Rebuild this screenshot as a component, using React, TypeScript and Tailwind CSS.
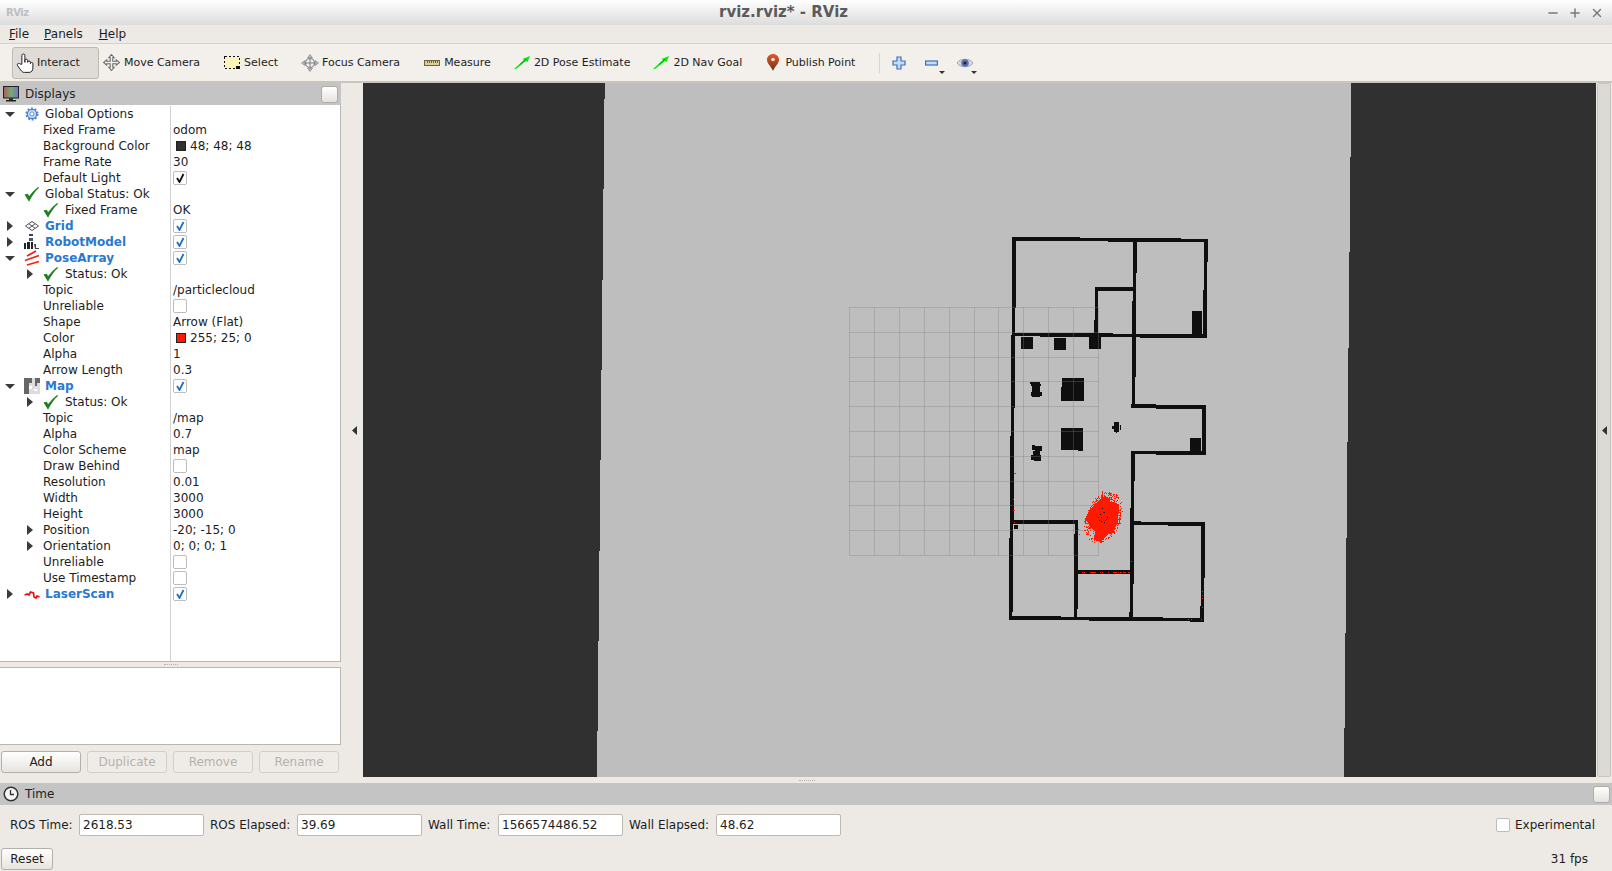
import React from "react";
import { Minus, Plus, X } from "lucide-react";

const font = "font-['DejaVu_Sans',sans-serif]";

// walls and furniture of the map, as x, y, w, h in window pixels
const walls: number[][] = [
  [1012, 237, 68, 4], [1080, 238, 28, 3], [1108, 238, 73, 4], [1181, 239, 27, 3],
  [1012, 237, 4, 71], [1012, 308, 3, 27],
  [1204, 239, 4, 23], [1204, 262, 3, 28], [1203, 290, 4, 48],
  [1133, 239, 4, 34], [1133, 273, 3, 28], [1132, 301, 4, 76], [1132, 377, 3, 27],
  [1095, 287, 38, 4], [1095, 287, 3, 33], [1094, 320, 4, 13],
  [1012, 333, 28, 3], [1040, 333, 73, 4], [1113, 334, 27, 3], [1140, 334, 67, 4],
  [1011, 335, 4, 73], [1011, 408, 3, 28], [1010, 436, 4, 84], [1010, 520, 3, 18],
  [1009, 538, 4, 74], [1009, 612, 3, 8],
  [1021, 337, 12, 12], [1054, 338, 12, 12], [1089, 337, 12, 12], [1192, 311, 10, 23],
  [1062, 378, 22, 23], [1061, 387, 1, 14],
  [1030, 382, 10, 2], [1031, 384, 10, 2], [1032, 386, 8, 6], [1031, 392, 11, 4], [1032, 396, 8, 1],
  [1114, 422, 5, 10], [1112, 426, 2, 3], [1120, 425, 1, 5], [1116, 432, 1, 1],
  [1061, 428, 22, 22], [1078, 450, 5, 1],
  [1032, 445, 3, 5], [1035, 446, 7, 5], [1033, 451, 7, 4], [1031, 455, 10, 5], [1034, 460, 7, 1],
  [1131, 404, 25, 4], [1156, 405, 50, 4], [1202, 405, 4, 50], [1190, 438, 11, 13],
  [1131, 451, 25, 3], [1156, 451, 50, 4],
  [1131, 451, 4, 30], [1131, 481, 3, 27], [1130, 508, 4, 76], [1130, 584, 3, 28], [1129, 612, 4, 8],
  [1134, 521, 7, 4], [1141, 522, 27, 3], [1168, 522, 37, 4],
  [1201, 522, 4, 56], [1201, 578, 3, 28], [1200, 606, 4, 16],
  [1009, 616, 52, 4], [1061, 617, 28, 3], [1089, 617, 74, 4], [1163, 618, 27, 3], [1190, 618, 14, 4],
  [1013, 520, 65, 4], [1075, 524, 3, 10], [1074, 534, 4, 75], [1074, 609, 3, 8],
  [1078, 570, 52, 4], [1014, 525, 4, 4],
];

const redDots: number[][] = [
  [1014, 473, 2, 1], [1013, 499, 1, 1], [1013, 510, 2, 1], [1014, 522, 1, 1], [1078, 529, 1, 1], [1079, 534, 1, 1],
  [1082, 572, 1, 1], [1084, 572, 1, 1], [1090, 572, 6, 1], [1100, 572, 1, 1], [1102, 572, 1, 1], [1108, 572, 1, 1],
  [1113, 572, 4, 1], [1118, 572, 1, 1], [1120, 572, 2, 1], [1123, 572, 3, 1], [1128, 572, 2, 1], [1131, 561, 1, 1],
  [1202, 591, 1, 1], [1202, 595, 1, 1], [1202, 598, 1, 1], [1202, 607, 1, 1], [1188, 619, 1, 1], [1191, 619, 1, 1], [1201, 619, 1, 1],
  // spikes of the particle cloud
  [1102, 491, 1, 9], [1119, 517, 1, 7], [1118, 523, 3, 1], [1085, 520, 4, 1], [1094, 537, 2, 3], [1100, 540, 2, 3],
  [1117, 504, 2, 2], [1120, 509, 1, 1], [1114, 500, 1, 2], [1086, 526, 1, 1], [1108, 495, 1, 1],
];

const holes: number[][] = [
  [1100, 514], [1103, 512], [1104, 512], [1098, 517], [1101, 517], [1107, 517], [1106, 519], [1099, 520], [1101, 521], [1105, 520], [1104, 522], [1102, 508],
];

// rough edge for the particle cloud, always the same
function cloudPixels() {
  const out: number[][] = [];
  let seed = 17;
  const next = () => {
    seed = (seed * 16807) % 2147483647;
    return seed / 2147483647;
  };
  for (let i = 0; i < 320; i++) {
    const a = next() * Math.PI * 2;
    const r = 0.8 + next() * 0.42;
    const dx = Math.cos(a) * 15 * r;
    const dy = Math.sin(a) * 21 * r;
    // the cloud leans a little to the right at the top
    out.push([Math.round(1103 + dx - dy * 0.22), Math.round(517 + dy)]);
  }
  return out;
}

const Arrow = ({ open }: { open: boolean }) =>
  open ? (
    <svg width="10" height="5" viewBox="0 0 10 5" className="block">
      <path d="M0 0h10L5 5z" fill="#3b3b3b" />
    </svg>
  ) : (
    <svg width="6" height="10" viewBox="0 0 6 10" className="block">
      <path d="M0 0l6 5-6 5z" fill="#3b3b3b" />
    </svg>
  );

const Check = () => (
  <svg width="16" height="16" viewBox="0 0 16 16" className="block">
    <path d="M1.500 9l3.500 5.500C7.500 9.500 10.500 5 14.500 1.500 10.500 4.500 7.500 8 5 11.200L3.500 8.500z" fill="#1d7f1d" stroke="#1d7f1d" strokeWidth="1.200" />
  </svg>
);

const Gear = () => (
  <svg width="16" height="16" viewBox="-1.500 -1.500 19 19" className="block">
    <circle cx="8" cy="8" r="5.500" fill="#cfe0f7" stroke="#4a7fd0" strokeWidth="1.500" />
    <circle cx="8" cy="8" r="6.800" fill="none" stroke="#4a7fd0" strokeWidth="2" strokeDasharray="2.200 2.100" />
    <circle cx="8" cy="8" r="2.500" fill="#ffffff" stroke="#4a7fd0" strokeWidth="1" />
  </svg>
);

const GridIcon = () => (
  <svg width="16" height="16" viewBox="0 0 16 16" className="block">
    <path d="M8 3.500L14.500 8 8 12.500 1.500 8zM4.800 5.800l6.500 4.500M11.200 5.800l-6.500 4.500" fill="none" stroke="#555555" strokeWidth="1" />
  </svg>
);

const RobotIcon = () => (
  <svg width="16" height="16" viewBox="0 0 16 16" className="block">
    <rect x="5" y="0" width="4" height="2" fill="#3a3a7a" />
    <rect x="5" y="4" width="4" height="3" fill="#555555" />
    <path d="M0 15V9h2v6zM3 15V8h3v7zM7 15V8h2v7z" fill="#222222" />
    <path d="M10 10h2v4h3v1h-4z" fill="#444444" />
  </svg>
);

const PoseIcon = () => (
  <svg width="16" height="16" viewBox="0 0 16 16" className="block">
    <path d="M3 6L12 1M1 10.500L15 5.500 M3 15L15 11.500" stroke="#ee2211" strokeWidth="1.800" fill="none" />
  </svg>
);

const MapIcon = () => (
  <svg width="16" height="16" viewBox="0 0 16 16" className="block" shapeRendering="crispEdges">
    <rect x="0" y="0" width="16" height="16" fill="#dddddd" />
    <path d="M0 0h8v5H5v11H0zM11 0h5v5h-5zM11 5h2v3h-2z" fill="#666666" />
    <path d="M5 8h3v3H5zM10 11h3v2h-3z" fill="#ffffff" />
  </svg>
);

const LaserIcon = () => (
  <svg width="16" height="16" viewBox="0 0 16 16" className="block">
    <path d="M0.500 9l3-1 1.500 1 1.500-3 3 1 .5 4 2 1 1-2 2.500 1" fill="none" stroke="#ee1111" strokeWidth="1.700" />
  </svg>
);

type RowData = {
  label: string;
  level?: number;
  open?: boolean;
  icon?: React.ReactNode;
  bold?: boolean;
  value?: string;
  checked?: boolean;
  blue?: boolean;
  color?: string;
};

const rows: RowData[] = [
  { label: "Global Options", open: true, icon: <Gear /> },
  { label: "Fixed Frame", level: 1, value: "odom" },
  { label: "Background Color", level: 1, value: "48; 48; 48", color: "#303030" },
  { label: "Frame Rate", level: 1, value: "30" },
  { label: "Default Light", level: 1, checked: true },
  { label: "Global Status: Ok", open: true, icon: <Check /> },
  { label: "Fixed Frame", level: 1, icon: <Check />, value: "OK" },
  { label: "Grid", open: false, icon: <GridIcon />, bold: true, checked: true, blue: true },
  { label: "RobotModel", open: false, icon: <RobotIcon />, bold: true, checked: true, blue: true },
  { label: "PoseArray", open: true, icon: <PoseIcon />, bold: true, checked: true, blue: true },
  { label: "Status: Ok", level: 1, open: false, icon: <Check /> },
  { label: "Topic", level: 1, value: "/particlecloud" },
  { label: "Unreliable", level: 1, checked: false },
  { label: "Shape", level: 1, value: "Arrow (Flat)" },
  { label: "Color", level: 1, value: "255; 25; 0", color: "#ff1900" },
  { label: "Alpha", level: 1, value: "1" },
  { label: "Arrow Length", level: 1, value: "0.3" },
  { label: "Map", open: true, icon: <MapIcon />, bold: true, checked: true, blue: true },
  { label: "Status: Ok", level: 1, open: false, icon: <Check /> },
  { label: "Topic", level: 1, value: "/map" },
  { label: "Alpha", level: 1, value: "0.7" },
  { label: "Color Scheme", level: 1, value: "map" },
  { label: "Draw Behind", level: 1, checked: false },
  { label: "Resolution", level: 1, value: "0.01" },
  { label: "Width", level: 1, value: "3000" },
  { label: "Height", level: 1, value: "3000" },
  { label: "Position", level: 1, open: false, value: "-20; -15; 0" },
  { label: "Orientation", level: 1, open: false, value: "0; 0; 0; 1" },
  { label: "Unreliable", level: 1, checked: false },
  { label: "Use Timestamp", level: 1, checked: false },
  { label: "LaserScan", open: false, icon: <LaserIcon />, bold: true, checked: true, blue: true },
];

const CheckBox = ({ checked, blue }: { checked?: boolean; blue?: boolean }) => (
  <div className="w-[14px] h-[14px] border border-[#bdbdbd] rounded-[2px] bg-white flex items-center justify-center">
    {checked && (
      <svg width="10" height="10" viewBox="0 0 10 10" className="block">
        <path d="M2 5l2.500 4L8.500 1" fill="none" stroke={blue ? "#1f6fc4" : "#111111"} strokeWidth="1.800" />
      </svg>
    )}
  </div>
);

const TreeRow = ({ row }: { row: RowData }) => {
  const level = row.level ?? 0;
  return (
    <div className="flex h-4 items-center">
      <div className="w-[171px] h-4 shrink-0 flex items-center border-r border-[#d2d2d2]">
        <div className={level === 0 ? "w-[24px] shrink-0 pl-[5px]" : "w-[43px] shrink-0 pl-[27px]"}>
          {row.open !== undefined && (
            <div className={!row.open && level === 0 ? "pl-[2px]" : ""}>
              <Arrow open={row.open} />
            </div>
          )}
        </div>
        {row.icon && <div className={level === 0 ? "w-[16px] mr-[5px] shrink-0" : "w-[16px] mr-[6px] shrink-0"}>{row.icon}</div>}
        <span className={row.bold ? "font-bold text-[#2a78d0] whitespace-nowrap" : "whitespace-nowrap"}>{row.label}</span>
      </div>
      <div className="flex items-center pl-[2px] min-w-0">
        {row.color && <div className="w-[10px] h-[10px] ml-[3px] mr-[4px] border border-[#222222]" style={{ background: row.color }} />}
        {row.value && <span className="whitespace-nowrap">{row.value}</span>}
        {row.checked !== undefined && <CheckBox checked={row.checked} blue={row.blue} />}
      </div>
    </div>
  );
};

const ToolButton = ({ icon, label, active, tight }: { icon: React.ReactNode; label: string; active?: boolean; tight?: boolean }) => (
  <div
    className={
      (tight ? "pr-[17px] " : "pr-[18px] ") +
      (active
        ? "flex items-center h-[32px] pl-[4px] gap-[4px] rounded-[3px] border border-[#bfbbb4] bg-[#dfdcd7]"
        : "flex items-center h-[32px] pl-[4px] gap-[4px] border border-transparent")
    }
  >
    <div className="w-[16px] h-[16px] flex items-center justify-center shrink-0">{icon}</div>
    <span className="whitespace-nowrap text-[11px] pt-[2px]">{label}</span>
  </div>
);

const GoalArrow = () => (
  <svg width="16" height="13" viewBox="0 0 16 13" className="block shrink-0">
    <path d="M0 13L10 4 8.500 3 16 0 13.500 6 12 5 2 13z" fill="#06e806" />
    <path d="M6 8.500L12 3.200" stroke="#0d9030" strokeWidth="0.900" />
  </svg>
);

const PanelHeader = ({ icon, title, right }: { icon: React.ReactNode; title: string; right: string }) => (
  <div className="h-[22px] bg-[#c4c4c4] flex items-center shrink-0">
    <div className="w-[16px] h-[16px] ml-[3px] shrink-0">{icon}</div>
    <span className="ml-[6px] text-[#222222]">{title}</span>
    <div className={"ml-auto h-[17px] w-[17px] rounded-[3px] border border-[#b0aca6] bg-gradient-to-b from-white to-[#e6e3de] " + right} />
  </div>
);

const TimeField = ({ label, value, labelWidth }: { label: string; value: string; labelWidth: string }) => (
  <div className="flex items-center">
    <span className={"whitespace-nowrap " + labelWidth}>{label}</span>
    <div className="w-[125px] h-[22px] pl-[3px] flex items-center bg-white border border-[#bdb9b3] rounded-[2px]">{value}</div>
  </div>
);

const SideButton = ({ label, disabled }: { label: string; disabled?: boolean }) => (
  <div
    className={
      disabled
        ? "w-[80px] h-[22px] flex items-center justify-center border border-[#d2cec8] rounded-[3px] text-[#b5b2ad] bg-[#efece8]"
        : "w-[80px] h-[22px] flex items-center justify-center border border-[#b3afa9] rounded-[3px] bg-gradient-to-b from-white to-[#e7e4df]"
    }
  >
    {label}
  </div>
);

const gridSteps = [0, 1, 2, 3, 4, 5, 6, 7, 8, 9, 10];

const RenderView = () => (
  <svg width="1233" height="694" viewBox="363 83 1233 694" className="block" shapeRendering="crispEdges">
    <polygon points="604.700,83 597,777 1344,777 1351.300,83" fill="#bebebe" />
    {walls.map((w, i) => (
      <rect key={"w" + i} x={w[0]} y={w[1]} width={w[2]} height={w[3]} fill="#0f0f0f" />
    ))}
    {/* the grid shows through the walls */}
    {gridSteps.map((i) => (
      <rect key={"v" + i} x={849 + i * 24.9} y={307} width="1" height="248" fill="#7d7d7d" fillOpacity="0.33" />
    ))}
    {gridSteps.map((i) => (
      <rect key={"h" + i} x={849} y={307 + i * 24.8} width="250" height="1" fill="#7d7d7d" fillOpacity="0.33" />
    ))}
    <polygon
      points="1102,491 1103,497 1110,498 1110,502 1114,502 1119,506 1118,522 1113,533 1108,534 1101,542 1094,540 1095,532 1090,527 1087,521 1085,520 1088,513 1092,507 1101,499"
      fill="#ff1900"
    />
    {cloudPixels().map((p, i) => (
      <rect key={"c" + i} x={p[0]} y={p[1]} width="1" height="1" fill="#ff1900" />
    ))}
    {holes.map((p, i) => (
      <rect key={"b" + i} x={p[0]} y={p[1]} width="1" height="1" fill="#111111" />
    ))}
    {redDots.map((d, i) => (
      <rect key={"r" + i} x={d[0]} y={d[1]} width={d[2]} height={d[3]} fill="#ff1900" />
    ))}
  </svg>
);

export default function App() {
  return (
    <div className={"w-[1612px] h-[871px] flex flex-col overflow-hidden bg-[#edeae6] text-[12px] text-[#1d1d1d] " + font}>
      {/* window title */}
      <div className="h-[25px] shrink-0 flex items-center bg-gradient-to-b from-white to-[#dcdcdc]">
        <span className="ml-[6px] w-[22px] text-[10px] tracking-[-0.5px] text-[#bdbdbd] font-bold">RViz</span>
        <span className="ml-[691px] text-[15px] font-bold text-[#5b5b5b] whitespace-nowrap">rviz.rviz* - RViz</span>
        <div className="ml-auto flex items-center gap-[8px] pr-[8px] text-[#787878]">
          <Minus size={14} strokeWidth={2.500} />
          <Plus size={14} strokeWidth={2.500} />
          <X size={14} strokeWidth={2.500} />
        </div>
      </div>

      {/* menu */}
      <div className="h-[19px] shrink-0 flex items-center pl-[9px] gap-[15px] border-b border-[#d6d2cc]">
        <span>
          <span className="underline">F</span>ile
        </span>
        <span>
          <span className="underline">P</span>anels
        </span>
        <span className="ml-[1px]">
          <span className="underline">H</span>elp
        </span>
      </div>

      {/* toolbar */}
      <div className="h-[39px] shrink-0 flex items-center pl-[12px] bg-[#f3f0eb] border-b-2 border-[#c9c6c0]">
        <ToolButton
          active
          label="Interact"
          icon={
            <svg width="20" height="20" viewBox="0 0 16 16" className="block shrink-0">
              <path
                d="M5.500 9V2a1.200 1.200 0 0 1 2.400 0v5.500V6a1.100 1.100 0 0 1 2.200 0v1.500a1.100 1.100 0 0 1 2.200 0v1a1 1 0 0 1 2 0V12c0 2-1 3.500-3 3.500H7.500c-1.500 0-2.200-.8-3-2L2 10c-.8-1.300 1-2.300 2-1.200z"
                fill="#ffffff"
                stroke="#222222"
                strokeWidth="0.800"
              />
            </svg>
          }
        />
        <ToolButton
          label="Move Camera"
          icon={
            <svg width="17" height="17" viewBox="0 0 16 16" className="block shrink-0">
              <path d="M8 .5l2.500 3H9.200v3.300h3.300V5.500l3 2.500-3 2.500V9.200H9.200v3.300h1.300L8 15.500l-2.500-3h1.300V9.200H3.500v1.300L.5 8l3-2.500v1.300h3.300V3.500H5.500z" fill="#f0f0f0" stroke="#6a6a6a" strokeWidth="1" />
            </svg>
          }
        />
        <ToolButton
          label="Select"
          icon={
            <svg width="16" height="16" viewBox="0 0 16 16" className="block" shapeRendering="crispEdges">
              <rect x="0.500" y="1.500" width="15" height="12" fill="#fbf4b8" stroke="#111111" strokeDasharray="2 2" />
              <rect x="12" y="11" width="4" height="3" fill="#111111" />
            </svg>
          }
        />
        <ToolButton
          label="Focus Camera"
          icon={
            <svg width="18" height="18" viewBox="0 0 18 18" className="block shrink-0">
              <path d="M9 .5L11.500 4h-5zM9 17.500L6.500 14h5zM.5 9L4 6.500v5zM17.500 9L14 11.500v-5z" fill="#b5b5b5" stroke="#8a8a8a" strokeWidth="0.700" />
              <circle cx="9" cy="9" r="4.500" fill="#ededed" stroke="#808080" strokeWidth="1.200" />
              <path d="M9 5v8M5 9h8" stroke="#808080" strokeWidth="1" />
            </svg>
          }
        />
        <ToolButton
          tight
          label="Measure"
          icon={
            <svg width="16" height="16" viewBox="0 0 16 16" className="block" shapeRendering="crispEdges">
              <rect x="0.500" y="5.500" width="15" height="5" fill="#dccf94" stroke="#6b6444" />
              <path d="M3 6v2M5 6v2M7 6v2M9 6v2M11 6v2M13 6v2" stroke="#6b6444" />
            </svg>
          }
        />
        <ToolButton tight label="2D Pose Estimate" icon={<GoalArrow />} />
        <ToolButton tight label="2D Nav Goal" icon={<GoalArrow />} />
        <ToolButton
          label="Publish Point"
          icon={
            <svg width="12" height="17" viewBox="0 0 12 17" className="block">
              <defs>
                <linearGradient id="pin" x1="0" y1="0" x2="0" y2="1">
                  <stop offset="0" stopColor="#e8552a" />
                  <stop offset="1" stopColor="#6b3417" />
                </linearGradient>
              </defs>
              <path d="M6 0c3.400 0 6 2.500 6 5.700C12 9.500 8 12 6 17 4 12 0 9.500 0 5.700 0 2.500 2.600 0 6 0z" fill="url(#pin)" />
              <circle cx="6" cy="5.500" r="1.800" fill="#f5e8e0" />
            </svg>
          }
        />
        <div className="w-px h-[20px] ml-[5px] bg-[#d8d4ce]" />
        <div className="ml-[12px]">
          <svg width="14" height="14" viewBox="0 0 14 14" className="block">
            <path d="M5 1h4v4h4v4H9v4H5V9H1V5h4z" fill="#c8dbf5" stroke="#3a72bd" strokeWidth="1.200" />
          </svg>
        </div>
        <div className="ml-[19px] flex items-end">
          <svg width="13" height="14" viewBox="0 0 13 14" className="block">
            <rect x="0.600" y="5" width="11.800" height="4" fill="#c8dbf5" stroke="#3a72bd" strokeWidth="1.200" />
          </svg>
          <svg width="6" height="3" viewBox="0 0 6 3" className="block ml-[1px] -mb-[4px]">
            <path d="M0 0h6L3 3z" fill="#333333" />
          </svg>
        </div>
        <div className="ml-[11px] flex items-end">
          <svg width="18" height="14" viewBox="0 0 18 14" className="block">
            <path d="M1 7c3-5 13-5 16 0-3 5-13 5-16 0z" fill="#d8dbe6" stroke="#a0a4b4" strokeWidth="1" />
            <circle cx="9" cy="7" r="3.800" fill="#5a70b0" />
            <circle cx="9" cy="7" r="1.500" fill="#1b1e3a" />
          </svg>
          <svg width="6" height="3" viewBox="0 0 6 3" className="block -ml-[3px] -mb-[4px]">
            <path d="M0 0h6L3 3z" fill="#333333" />
          </svg>
        </div>
      </div>

      {/* docks and render view */}
      <div className="h-[694px] shrink-0 flex">
        <div className="w-[341px] shrink-0 flex flex-col">
          <PanelHeader
            title="Displays"
            right="mr-[3px]"
            icon={
              <svg width="16" height="16" viewBox="0 0 16 16" className="block">
                <defs>
                  <linearGradient id="scr" x1="0" y1="0" x2="1" y2="0">
                    <stop offset="0" stopColor="#b05a5a" />
                    <stop offset="0.500" stopColor="#6fae6f" />
                    <stop offset="1" stopColor="#7a6fd0" />
                  </linearGradient>
                </defs>
                <rect x="0.500" y="0.500" width="15" height="11.500" fill="url(#scr)" stroke="#222222" />
                <rect x="6" y="12" width="4" height="2" fill="#333333" />
                <rect x="3" y="14" width="10" height="1.500" fill="#222222" />
              </svg>
            }
          />
          <div className="flex-1 min-h-0 flex flex-col pt-px bg-white border-r border-b border-[#bab6b0]">
            {rows.map((row, i) => (
              <TreeRow key={i} row={row} />
            ))}
            <div className="w-[171px] flex-1 border-r border-[#d2d2d2]" />
          </div>
          <div className="h-[5px] shrink-0 flex items-center justify-center">
            <div className="w-[14px] h-px border-t border-dotted border-[#b5b1ab]" />
          </div>
          <div className="h-[78px] shrink-0 bg-white border-t border-r border-b border-[#bab6b0]" />
          <div className="h-[32px] shrink-0 flex items-start gap-[6px] pl-[1px] pt-[6px]">
            <SideButton label="Add" />
            <SideButton label="Duplicate" disabled />
            <SideButton label="Remove" disabled />
            <SideButton label="Rename" disabled />
          </div>
        </div>
        <div className="w-[22px] shrink-0 flex items-center justify-end pr-[6px]">
          <svg width="5" height="9" viewBox="0 0 5 9" className="block">
            <path d="M5 0L0 4.500 5 9z" fill="#333333" />
          </svg>
        </div>
        <div className="w-[1233px] shrink-0 bg-[#303030]">
          <RenderView />
        </div>
        <div className="w-[14px] mx-px shrink-0 flex items-center justify-center bg-[#dcdad5] border border-[#c8c5bf] rounded-[2px]">
          <svg width="5" height="9" viewBox="0 0 5 9" className="block">
            <path d="M5 0L0 4.500 5 9z" fill="#333333" />
          </svg>
        </div>
      </div>

      {/* splitter */}
      <div className="h-[6px] shrink-0 flex items-center justify-center pl-[1px]">
        <div className="w-[16px] h-px border-t border-dotted border-[#b5b1ab]" />
      </div>

      {/* time panel */}
      <PanelHeader
        title="Time"
        right="mr-[2px]"
        icon={
          <svg width="16" height="16" viewBox="0 0 16 16" className="block">
            <circle cx="8" cy="8" r="6.800" fill="#f4f4f4" stroke="#333333" strokeWidth="1.500" />
            <path d="M7.500 4v4.500H11" fill="none" stroke="#333333" strokeWidth="1.300" />
          </svg>
        }
      />
      <div className="flex items-center h-[22px] mt-[9px] shrink-0 pl-[10px] gap-[6px]">
        <TimeField label="ROS Time:" value="2618.53" labelWidth="w-[69px]" />
        <TimeField label="ROS Elapsed:" value="39.69" labelWidth="w-[87px]" />
        <TimeField label="Wall Time:" value="1566574486.52" labelWidth="w-[70px]" />
        <TimeField label="Wall Elapsed:" value="48.62" labelWidth="w-[87px]" />
        <div className="ml-auto flex items-center pr-[17px]">
          <div className="w-[14px] h-[14px] border border-[#bdbdbd] rounded-[2px] bg-white mr-[5px]" />
          <span>Experimental</span>
        </div>
      </div>
      <div className="flex items-center mt-[12px] pl-[1px] pr-[24px] shrink-0">
        <div className="w-[52px] h-[22px] flex items-center justify-center border border-[#b3afa9] rounded-[3px] bg-gradient-to-b from-white to-[#e7e4df]">
          Reset
        </div>
        <span className="ml-auto">31 fps</span>
      </div>
    </div>
  );
}
